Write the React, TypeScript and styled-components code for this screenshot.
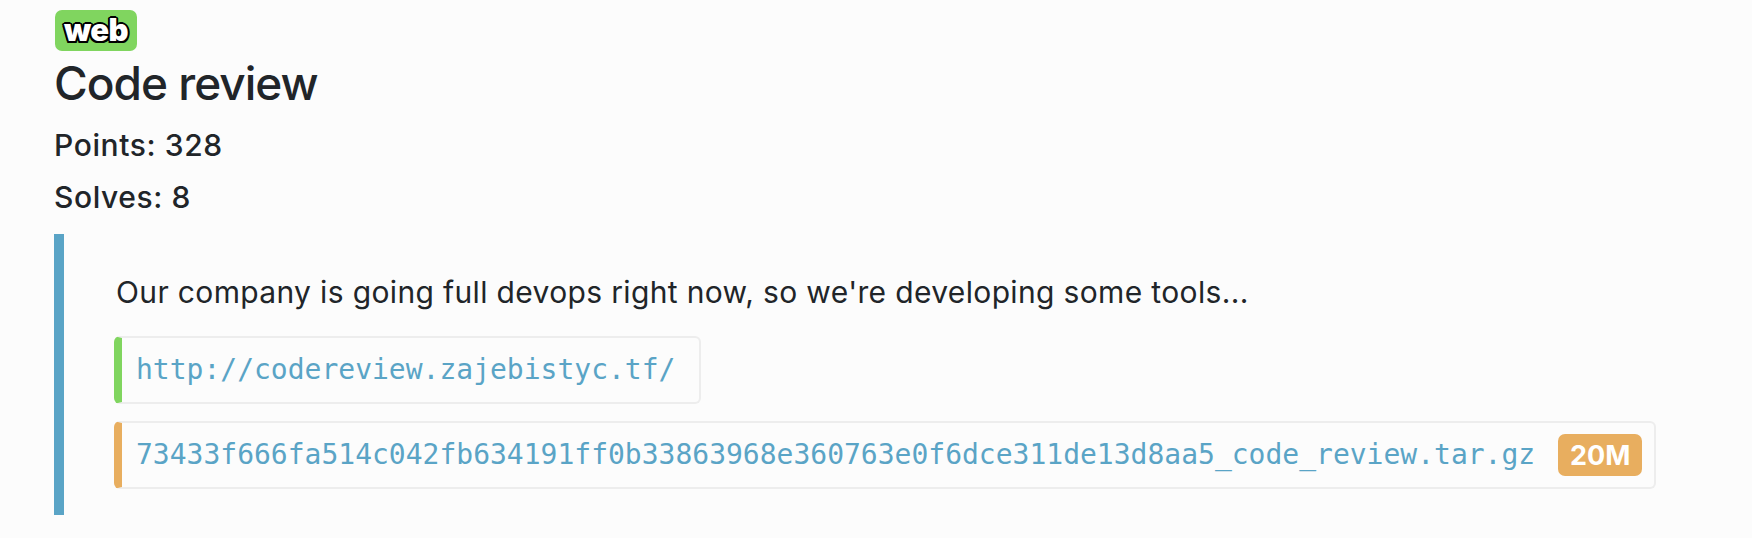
import React from "react";
import styled, { createGlobalStyle } from "styled-components";

const GlobalStyle = createGlobalStyle`
  html, body {
    margin: 0;
    padding: 0;
    background: #fcfcfc;
  }
  body {
    font-family: Inter, "Noto Sans", "Liberation Sans", sans-serif;
    color: #212529;
  }
`;

const Page = styled.div`
  padding: 10px 0 0 54px;
  display: flex;
  flex-direction: column;
  align-items: flex-start;
`;

const CategoryTag = styled.span`
  display: inline-flex;
  align-items: center;
  justify-content: center;
  height: 41px;
  width: 82px;
  margin-left: 1px;
  border-radius: 7px;
  background: #80d55f;
  color: #ffffff;
  font-family: Inter, "Liberation Sans", sans-serif;
  font-weight: 900;
  font-size: 31px;
  letter-spacing: -0.5px;
  line-height: 1;
  padding-bottom: 3px;
  box-sizing: border-box;
  text-shadow:
    -1.5px -1.5px 0 #000, 1.5px -1.5px 0 #000, -1.5px 1.5px 0 #000, 1.5px 1.5px 0 #000,
    0 -2px 0 #000, 0 2px 0 #000, -2px 0 0 #000, 2px 0 0 #000;
`;

const Title = styled.h3`
  margin: 4px 0 0 0;
  font-size: 46px;
  font-weight: 500;
  line-height: 56px;
  letter-spacing: -1px;
`;

const Stat = styled.div`
  font-size: 30px;
  font-weight: 500;
  line-height: 52px;
  letter-spacing: 0.6px;
`;

const StatList = styled.div`
  margin-top: 8px;
  display: flex;
  flex-direction: column;
`;

const Quote = styled.div`
  margin-top: 11px;
  border-left: 10px solid #5aa4c6;
  padding: 36px 0 26px 50px;
  display: flex;
  flex-direction: column;
  align-items: flex-start;
`;

const Description = styled.p`
  margin: 0 0 21px 2px;
  font-size: 30px;
  line-height: 45px;
  font-weight: 400;
  letter-spacing: 0.35px;
`;

const FileList = styled.div`
  display: flex;
  flex-direction: column;
  align-items: flex-start;
  gap: 17px;
`;

const FileRow = styled.div<{ $accent: string }>`
  display: flex;
  align-items: center;
  box-sizing: border-box;
  height: 68px;
  border: 2px solid #ededed;
  border-left: 8px solid ${(p) => p.$accent};
  border-radius: 6px;
  padding: 0 12px 0 14px;
  background: #fcfcfc;
`;

const FileLink = styled.a`
  font-family: "DejaVu Sans Mono", "Liberation Mono", monospace;
  font-size: 28px;
  line-height: 42px;
  color: #5aa4c6;
  text-decoration: none;
  margin-right: 12px;
`;

const SizeBadge = styled.span`
  display: inline-flex;
  align-items: center;
  justify-content: center;
  height: 42px;
  width: 84px;
  margin-left: 11px;
  border-radius: 7px;
  background: #e8ae5f;
  color: #ffffff;
  font-family: Inter, "Liberation Sans", sans-serif;
  font-weight: 700;
  font-size: 27px;
  line-height: 1;
`;

const files = [
  { name: "http://codereview.zajebistyc.tf/", accent: "#80d55f" },
  {
    name: "73433f666fa514c042fb634191ff0b33863968e360763e0f6dce311de13d8aa5_code_review.tar.gz",
    accent: "#e8ae5f",
    size: "20M",
  },
];

export default function App() {
  return (
    <>
      <GlobalStyle />
      <Page>
        <CategoryTag>web</CategoryTag>
        <Title>Code review</Title>
        <StatList>
          <Stat>Points: 328</Stat>
          <Stat>Solves: 8</Stat>
        </StatList>
        <Quote>
          <Description>
            Our company is going full devops right now, so we're developing some tools...
          </Description>
          <FileList>
            {files.map((f) => (
              <FileRow key={f.name} $accent={f.accent}>
                <FileLink href="#">{f.name}</FileLink>
                {f.size && <SizeBadge>{f.size}</SizeBadge>}
              </FileRow>
            ))}
          </FileList>
        </Quote>
      </Page>
    </>
  );
}
